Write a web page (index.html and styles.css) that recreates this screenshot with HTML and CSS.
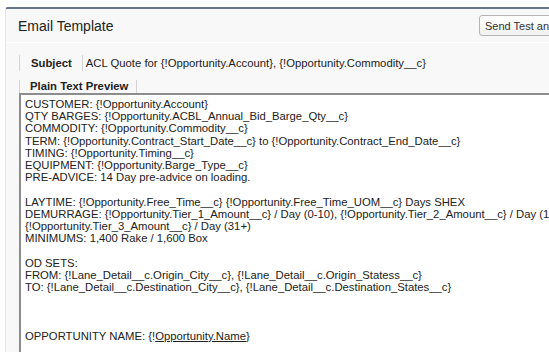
FILE: index.html
```html
<!DOCTYPE html>
<html>
<head>
<meta charset="utf-8">
<link rel="stylesheet" href="styles.css">
</head>
<body>
<div class="panel">
  <div class="header">
    <h2 class="title">Email Template</h2>
    <button class="btn">Send Test and Verify Merge Fields</button>
  </div>
  <div class="body">
    <div class="subject-row">
      <span class="label">Subject</span>
      <span class="value">ACL Quote for {!Opportunity.Account}, {!Opportunity.Commodity__c}</span>
    </div>
    <div class="tab-row">
      <span class="tab">Plain Text Preview</span>
    </div>
    <div class="preview">CUSTOMER: {!Opportunity.Account}
QTY BARGES: {!Opportunity.ACBL_Annual_Bid_Barge_Qty__c}
COMMODITY: {!Opportunity.Commodity__c}
TERM: {!Opportunity.Contract_Start_Date__c} to {!Opportunity.Contract_End_Date__c}
TIMING: {!Opportunity.Timing__c}
EQUIPMENT: {!Opportunity.Barge_Type__c}
PRE-ADVICE: 14 Day pre-advice on loading.

LAYTIME: {!Opportunity.Free_Time__c} {!Opportunity.Free_Time_UOM__c} Days SHEX
DEMURRAGE: {!Opportunity.Tier_1_Amount__c} / Day (0-10), {!Opportunity.Tier_2_Amount__c} / Day (11-30),
{!Opportunity.Tier_3_Amount__c} / Day (31+)
MINIMUMS: 1,400 Rake / 1,600 Box

OD SETS:
FROM: {!Lane_Detail__c.Origin_City__c}, {!Lane_Detail__c.Origin_Statess__c}
TO: {!Lane_Detail__c.Destination_City__c}, {!Lane_Detail__c.Destination_States__c}



OPPORTUNITY NAME: {!<span class="u">Opportunity.Name</span>}</div>
  </div>
</div>
</body>
</html>
```

FILE: styles.css
```css
html, body {
  margin: 0;
  padding: 0;
  background: #ffffff;
  overflow: hidden;
}
body {
  width: 549px;
  height: 352px;
  font-family: "Liberation Sans", Arial, sans-serif;
  color: #222;
}
.panel {
  display: flex;
  flex-direction: column;
  margin: 7px 0 0 5px;
  height: 343px;
  overflow: hidden;
  border-top: 2px solid #68758c;
  border-left: 1px solid #e6e6e6;
  border-top-left-radius: 3px;
  background: #f8f8f8;
}
.header {
  flex: none;
  display: flex;
  align-items: center;
  height: 33px;
  padding-left: 12px;
  border-bottom: 1px solid #ffffff;
  white-space: nowrap;
  overflow: hidden;
}
.title {
  flex: none;
  width: 461px;
  margin: 0;
  font-size: 14px;
  font-weight: normal;
  color: #222;
}
.btn {
  flex: none;
  height: 21px;
  padding: 0 5px;
  font-family: "Liberation Sans", Arial, sans-serif;
  font-size: 11px;
  color: #333;
  background: linear-gradient(#ffffff, #f1f1f1);
  border: 1px solid #b5b5b5;
  border-radius: 3px;
}
.body {
  flex: 1;
  display: flex;
  flex-direction: column;
  min-height: 0;
  padding: 12px 0 0 13px;
}
.subject-row {
  display: flex;
  align-items: center;
  height: 16px;
  font-size: 11.3px;
  white-space: nowrap;
}
.label {
  font-weight: bold;
  padding: 0 10px 0 11px;
  border-left: 1px solid #d4d4d4;
  line-height: 16px;
}
.value {
  padding-left: 3px;
  border-left: 1px solid #d4d4d4;
  line-height: 16px;
}
.tab-row {
  margin-top: 9px;
  height: 13px;
  font-size: 11.3px;
}
.tab {
  display: inline-block;
  font-weight: bold;
  padding: 0 8px 0 10px;
  border-left: 1px solid #d4d4d4;
  border-right: 1px solid #d4d4d4;
  line-height: 13px;
  height: 13px;
  vertical-align: top;
}
.preview {
  flex: 1;
  min-height: 0;
  overflow: hidden;
  background: #ffffff;
  border-top: 2px solid #8d8d8d;
  border-left: 2px solid #8d8d8d;
  padding: 3px 0 0 4px;
  font-size: 11.3px;
  line-height: 12.2px;
  white-space: pre;
  color: #222;
}
.u {
  text-decoration: underline;
}
```
